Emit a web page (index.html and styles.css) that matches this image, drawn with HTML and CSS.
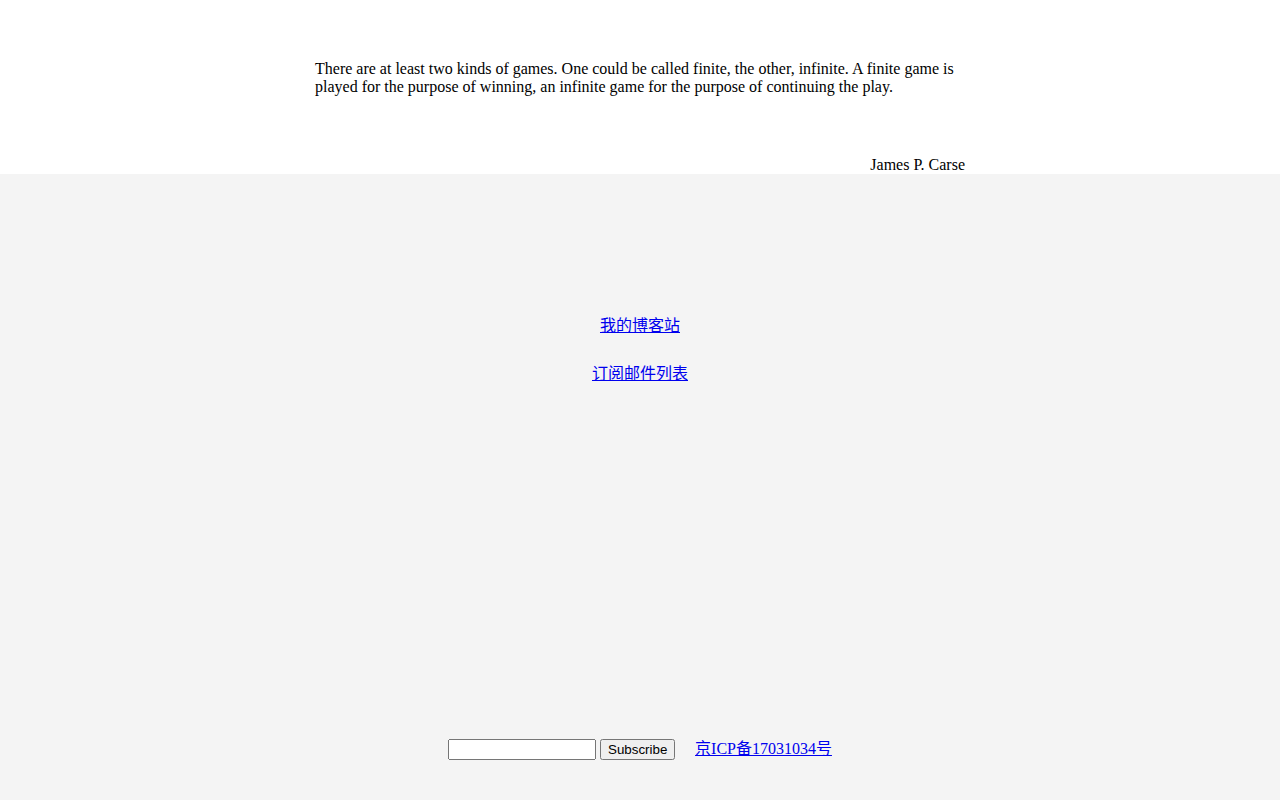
FILE: index.html
```html
<!DOCTYPE html>
<html lang="zh">
<head>
<meta charset="utf-8">
<title>Infinite Game</title>
<link rel="stylesheet" href="styles.css">
</head>
<body>
<header class="hero">
  <div class="quote">
    <p class="quote-text">There are at least two kinds of games. One could be called finite, the other, infinite. A finite game is played for the purpose of winning, an infinite game for the purpose of continuing the play.</p>
    <p class="quote-author">James P. Carse</p>
  </div>
</header>
<main class="lower">
  <nav class="links">
    <a href="#" class="nav-link">我的博客站</a>
    <a href="#" class="nav-link">订阅邮件列表</a>
  </nav>
  <footer class="footer">
    <form class="subscribe" onsubmit="return false;">
      <input type="text" class="sub-input">
      <button type="submit" class="sub-btn">Subscribe</button>
    </form>
    <a href="#" class="icp">京ICP备17031034号</a>
  </footer>
</main>
</body>
</html>
```

FILE: styles.css
```css
html, body {
  margin: 0;
  padding: 0;
}
body {
  font-family: "Liberation Serif", "Noto Sans CJK SC", serif;
  font-size: 16px;
  color: #000;
  background: #f4f4f4;
}
.hero {
  background: #fff;
  height: 174px;
  box-sizing: border-box;
  padding-top: 60px;
}
.quote {
  width: 650px;
  margin: 0 auto;
  display: flex;
  flex-direction: column;
  height: 114px;
}
.quote-text {
  margin: 0;
  line-height: 18px;
}
.quote-author {
  margin: auto 0 0 0;
  text-align: right;
  line-height: 18px;
}
.lower {
  height: 626px;
  box-sizing: border-box;
  padding: 143px 0 40px;
  display: flex;
  flex-direction: column;
  align-items: center;
}
.links {
  display: flex;
  flex-direction: column;
  align-items: center;
  gap: 30px;
}
.nav-link {
  color: #0000ee;
  line-height: 18px;
}
.footer {
  margin-top: auto;
  display: flex;
  align-items: flex-start;
  gap: 20px;
  height: 22px;
}
.subscribe {
  margin: 0;
  display: flex;
  align-items: center;
  gap: 4px;
  padding-top: 1px;
}
.sub-input {
  box-sizing: border-box;
  width: 148px;
  height: 21px;
  margin: 0;
}
.sub-btn {
  box-sizing: border-box;
  width: 75px;
  height: 21px;
  margin: 0;
  padding: 1px 6px;
  font-family: "Liberation Sans", Arial, sans-serif;
  font-size: 13.33px;
}
.icp {
  color: #0000ee;
  line-height: 18px;
  padding-top: 2px;
}
```
